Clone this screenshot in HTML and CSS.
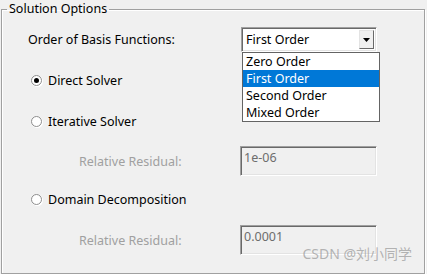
FILE: index.html
```html
<!DOCTYPE html>
<html lang="en">

<head>
    <meta charset="UTF-8">
    <title>Solution Options</title>
    <link rel="stylesheet" href="styles.css">
</head>

<body>
    <fieldset class="group">
        <legend>Solution Options</legend>

        <div class="row basis">
            <span class="label">Order of Basis Functions:</span>
            <div class="combo">
                <span class="combo-text">First Order</span>
                <span class="combo-btn">
                    <svg width="7" height="4" viewBox="0 0 7 4"><path d="M0 0h7L3.5 4z" fill="#000"/></svg>
                </span>
                <ul class="combo-list">
                    <li>Zero Order</li>
                    <li class="selected">First Order</li>
                    <li>Second Order</li>
                    <li>Mixed Order</li>
                </ul>
            </div>
        </div>

        <div class="row radio-row direct">
            <span class="radio checked"></span>
            <span>Direct Solver</span>
        </div>

        <div class="row radio-row iterative">
            <span class="radio"></span>
            <span>Iterative Solver</span>
        </div>

        <div class="row residual res1">
            <span class="label disabled">Relative Residual:</span>
            <div class="textbox">1e-06</div>
        </div>

        <div class="row radio-row domain">
            <span class="radio"></span>
            <span>Domain Decomposition</span>
        </div>

        <div class="row residual res2">
            <span class="label disabled">Relative Residual:</span>
            <div class="textbox">0.0001</div>
        </div>

        <div class="watermark">CSDN @刘小同学</div>
    </fieldset>
</body>

</html>
```

FILE: styles.css
```css
/* dialog styles */
body {
    margin: 0;
    background: #f0f0f0;
    font-family: "Noto Sans", "Noto Sans CJK SC", sans-serif;
    font-size: 12.5px;
    color: #000;
    width: 427px;
    height: 274px;
    overflow: hidden;
}

.group {
    position: relative;
    margin: 1px 2px 0 1px;
    padding: 0;
    height: 271px;
    border: 1px solid #a0a0a0;
    box-shadow: inset 1px 1px 0 #fff, 1px 1px 0 #fff;
}

.group legend {
    margin-left: 5px;
    padding: 0 2px;
    line-height: 16px;
}

.row {
    display: flex;
    align-items: center;
}

.basis {
    margin-top: 10px;
    height: 25px;
}

.basis .label {
    margin-left: 26px;
    width: 213px;
}

.combo {
    position: relative;
    display: flex;
    width: 136px;
    height: 25px;
    box-sizing: border-box;
    background: #fff;
    border: 1px solid;
    border-color: #a0a0a0 #fff #fff #a0a0a0;
    box-shadow: inset 1px 1px 0 #696969, inset -1px -1px 0 #e3e3e3;
}

.combo-text {
    flex: 1;
    padding: 3px 0 0 4px;
}

.combo-btn {
    width: 15px;
    height: 19px;
    margin: 2px 2px 0 0;
    box-sizing: border-box;
    background: #f0f0f0;
    border: 1px solid;
    border-color: #e3e3e3 #696969 #696969 #e3e3e3;
    display: flex;
    align-items: center;
    justify-content: center;
}

.combo-list {
    position: absolute;
    top: 24px;
    left: 0;
    width: 138px;
    margin: 0;
    padding: 0;
    list-style: none;
    background: #fff;
    border: 1px solid #646464;
    box-sizing: border-box;
    z-index: 2;
}

.combo-list li {
    height: 17px;
    line-height: 17px;
    padding-left: 3px;
}

.combo-list .selected {
    background: #0078d7;
    color: #fff;
}

.radio-row {
    height: 20px;
    padding-left: 29px;
}

.radio {
    width: 11px;
    height: 11px;
    margin-right: 6px;
    box-sizing: border-box;
    border-radius: 50%;
    border: 1px solid #8e8e8e;
    background: #fff;
    box-shadow: 1px 1px 0 #fff;
    display: flex;
    align-items: center;
    justify-content: center;
}

.radio.checked::after {
    content: "";
    width: 5px;
    height: 5px;
    border-radius: 50%;
    background: #000;
}

.direct {
    margin-top: 18px;
}

.iterative {
    margin-top: 21px;
}

.domain {
    margin-top: 13px;
}

.residual .label {
    margin-left: 77px;
    width: 161px;
}

.disabled {
    color: #a0a0a0;
}

.res1 {
    margin-top: 15px;
}

.res2 {
    margin-top: 16px;
}

.textbox {
    width: 137px;
    height: 30px;
    box-sizing: border-box;
    padding: 2px 0 0 3px;
    color: #6d6d6d;
    border: 1px solid;
    border-color: #a0a0a0 #fff #fff #a0a0a0;
    box-shadow: inset 1px 1px 0 #696969, inset -1px -1px 0 #e3e3e3;
}

.watermark {
    position: absolute;
    right: 12px;
    bottom: 10px;
    font-size: 14px;
    color: rgba(150, 150, 150, 0.7);
}
```
